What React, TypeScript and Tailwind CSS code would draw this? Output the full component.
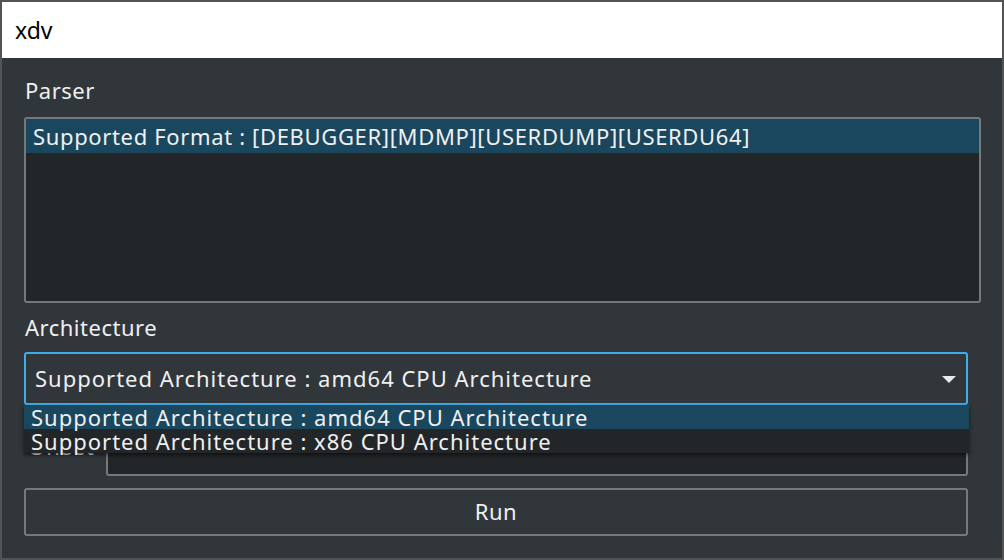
import React from "react";

export default function App() {
  const font = { fontFamily: '"Noto Sans", "Noto Sans CJK KR", sans-serif' };
  return (
    <div
      className="w-[1004px] h-[560px] border-2 border-[#545454] flex flex-col bg-[#31363b] text-[#eff0f1] relative overflow-hidden"
      style={font}
    >
      <div className="h-[56px] bg-white text-black flex items-center pl-[13px] text-[23px] shrink-0">
        xdv
      </div>
      <div className="flex flex-col px-[22px]">
        <div className="mt-[17px] mb-[2px] text-[22px] leading-[30px] pl-[1px] tracking-[0.5px]">Parser</div>
        <div className="mt-[10px] h-[186px] mr-[-1px] border-2 border-[#76797c] rounded-[3px] bg-[#232629] overflow-hidden">
          <div className="h-[34px] bg-[#1b475e] flex items-center pl-[7px] text-[22px] leading-[30px] tracking-[0.65px]">
            Supported Format : [DEBUGGER][MDMP][USERDUMP][USERDU64]
          </div>
        </div>
        <div className="mt-[9px] text-[22px] leading-[30px] pl-[1px] tracking-[0.5px]">Architecture</div>
        <div className="mt-[10px] h-[53px] mr-[12px] border-2 border-[#3daee9] rounded-[3px] flex items-center justify-between pl-[9px] pr-[8px]">
          <span className="text-[22px] tracking-[1px] mt-[-1px]">Supported Architecture : amd64 CPU Architecture</span>
          <svg width="16" height="10" viewBox="0 0 16 10" className="mr-[1px] mt-[2px]">
            <polygon points="1,1 15,1 8,8" fill="#e8e9ea" />
          </svg>
        </div>
        <div className="mt-[35px] h-[36px] flex mr-[12px]">
          <div className="w-[82px] text-[22px] leading-[28px] pl-[4px] mt-[-8px] tracking-[0.5px]">Offset</div>
          <div className="flex-1 h-full border-2 border-[#76797c] rounded-[3px] bg-[#232629]" />
        </div>
        <button className="mt-[12px] h-[48px] mr-[12px] border-2 border-[#76797c] rounded-[3px] bg-[#31363b] text-[22px] tracking-[0.5px] flex items-center justify-center">
          <span className="mt-[-2px]">Run</span>
        </button>
      </div>
      <div className="absolute left-[22px] top-[403px] w-[945px] bg-[#232629] shadow-[0_2px_4px_rgba(0,0,0,0.6)] text-[22px] leading-[24px] tracking-[1px]">
        <div className="h-[24px] bg-[#1b475e] pl-[7px]">Supported Architecture : amd64 CPU Architecture</div>
        <div className="h-[24px] pl-[7px]">Supported Architecture : x86 CPU Architecture</div>
      </div>
    </div>
  );
}
